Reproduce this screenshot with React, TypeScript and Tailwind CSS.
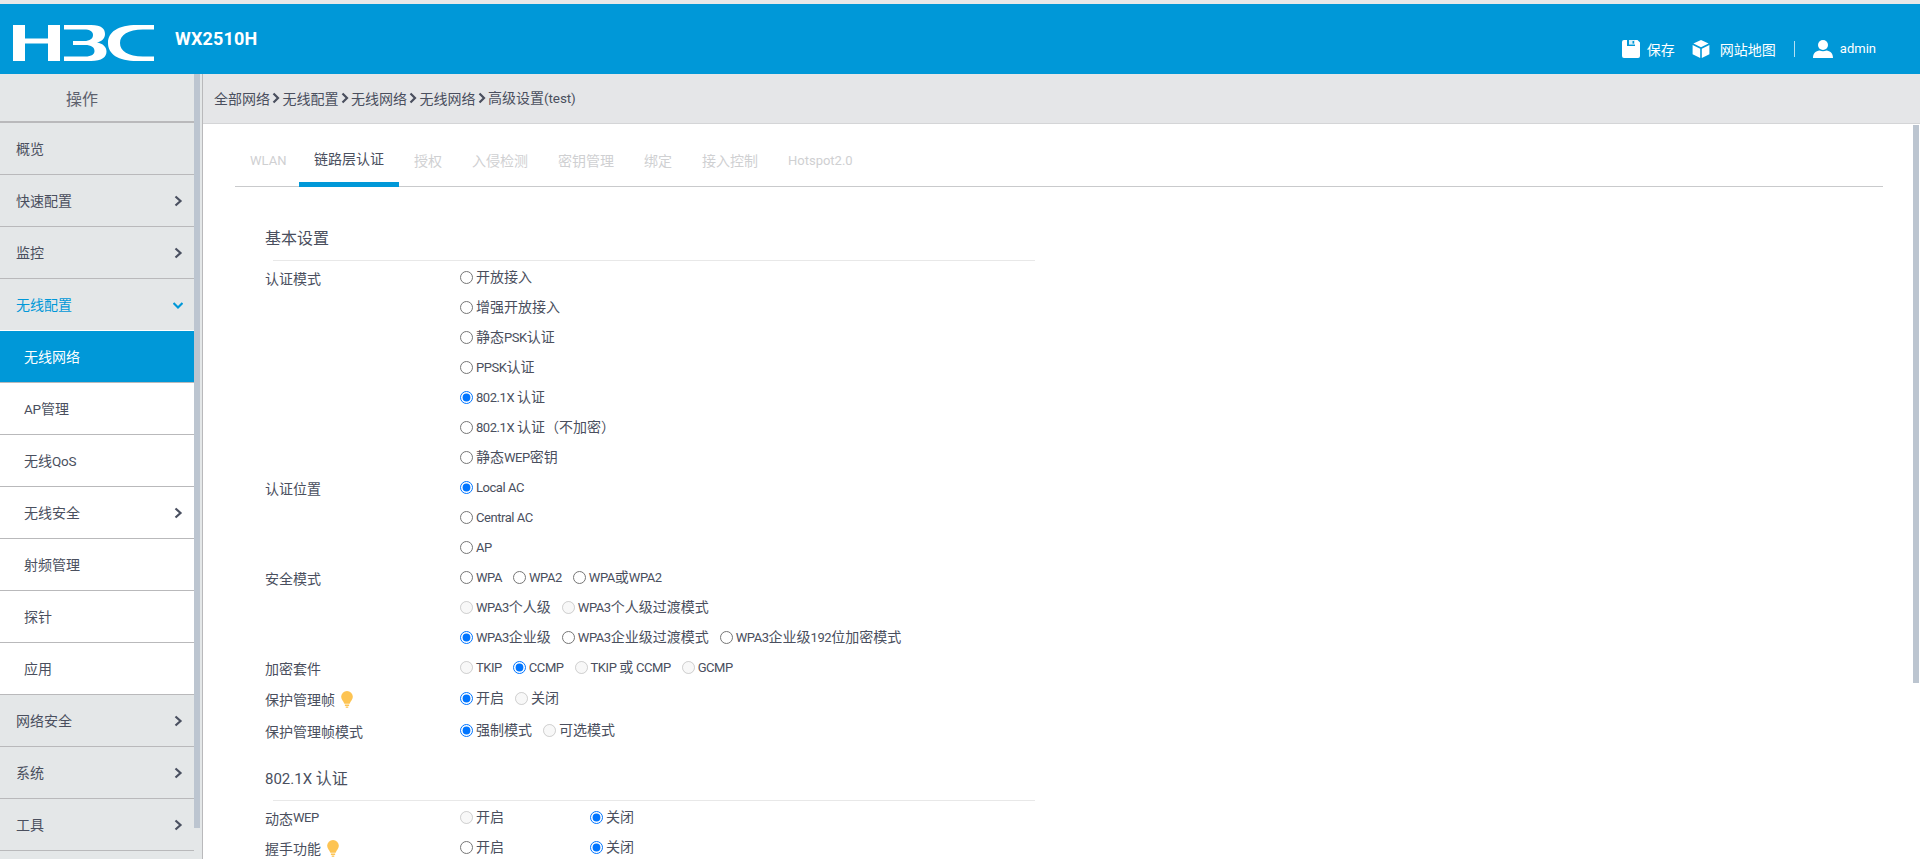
import React from "react";

const FONT = "font-['Noto_Sans_CJK_SC','Microsoft_YaHei',sans-serif]";

function T({ children, size = "text-[13px] tracking-[-0.45px]" }: { children: string; size?: string }) {
  const parts = children.split(/([\x20-\x7e]+)/).filter(Boolean);
  return (
    <>
      {parts.map((p, i) =>
        /^[\x20-\x7e]+$/.test(p) ? (
          <span key={i} className={`font-['Roboto',sans-serif] ${size} whitespace-pre`}>
            {p}
          </span>
        ) : (
          <span key={i}>{p}</span>
        )
      )}
    </>
  );
}

function Chevron({ down, color = "#4a5060" }: { down?: boolean; color?: string }) {
  return (
    <svg width="10" height="12" viewBox="0 0 10 12" className="shrink-0">
      {down ? (
        <path d="M0.5 4 L5 8.5 L9.5 4" fill="none" stroke={color} strokeWidth="2.2" />
      ) : (
        <path d="M2.5 1.5 L7.5 6 L2.5 10.5" fill="none" stroke={color} strokeWidth="2.2" />
      )}
    </svg>
  );
}

function Logo() {
  return (
    <svg width="142" height="36" viewBox="0 0 142 36" className="ml-[13px] shrink-0" fill="#fff">
      <path d="M0 0H12V13.5H35V0H47V36H35V18.5H12V36H0Z" />
      <path d="M51 0H78C89 0 92 4 92 9C92 13 89 16.5 84 17.5C90 18.5 93.5 22 93.5 26.5C93.5 32 89 36 78 36H51V31.5H72C79 31.5 81.5 29 81.5 26C81.5 22.5 78.5 20 72 20H60V16H71C77 16 80 13.5 80 10C80 6.5 77 4.5 71 4.5H51Z" />
      <path d="M141 0V4.5H130C115 4.5 107 10 107 18C107 26 115 31.5 130 31.5H141V36H124C105 36 95 29 95 18C95 7 105 0 124 0Z" />
    </svg>
  );
}

function HeaderBar() {
  return (
    <header className="flex h-[70px] shrink-0 items-start bg-[#0098d8] text-white">
      <div className="mt-[21px]">
        <Logo />
      </div>
      <div className="ml-[20px] mt-[25px] font-['Roboto',sans-serif] text-[18px] font-bold leading-[20px] tracking-[0.15px]">
        WX2510H
      </div>
      <div className="ml-auto mr-[44px] mt-[36px] flex h-[18px] items-center text-[14px]">
        <svg width="18" height="18" viewBox="0 0 18 18" fill="#fff">
          <path d="M2 0H5V6H13V0H15.5L18 2.5V16A2 2 0 0 1 16 18H2A2 2 0 0 1 0 16V2A2 2 0 0 1 2 0Z" />
          <rect x="7" y="0" width="6" height="4.6" fill="#fff" opacity="0.85" />
          <rect x="10.5" y="1" width="1.6" height="2.6" fill="#0098d8" />
        </svg>
        <span className="ml-[7px]">保存</span>
        <svg width="18" height="18" viewBox="0 0 18 18" fill="#fff" className="ml-[17px]">
          <path d="M9 0L16.6 3.6L9 7.2L1.4 3.6Z" />
          <path d="M0.6 5L8.2 8.7V18L0.6 14.2Z" />
          <path d="M17.4 5L9.8 8.7V18L17.4 14.2Z" />
        </svg>
        <span className="ml-[10px]">网站地图</span>
        <div className="ml-[18px] h-[16px] w-px bg-white/70" />
        <svg width="20" height="18" viewBox="0 0 20 18" fill="#fff" className="ml-[18px]">
          <circle cx="10" cy="5" r="5" />
          <path d="M0 18C0 13 3 11 6.5 10.5C8.5 11.6 11.5 11.6 13.5 10.5C17 11 20 13 20 18Z" />
        </svg>
        <span className="ml-[7px] font-['Roboto',sans-serif] text-[13px]">admin</span>
      </div>
    </header>
  );
}

type NavItem = { label: string; arrow?: boolean; tone?: "gray" | "open" | "active" | "white" };

const nav: NavItem[] = [
  { label: "概览" },
  { label: "快速配置", arrow: true },
  { label: "监控", arrow: true },
  { label: "无线配置", tone: "open" },
  { label: "无线网络", tone: "active" },
  { label: "AP管理", tone: "white" },
  { label: "无线QoS", tone: "white" },
  { label: "无线安全", tone: "white", arrow: true },
  { label: "射频管理", tone: "white" },
  { label: "探针", tone: "white" },
  { label: "应用", tone: "white" },
  { label: "网络安全", arrow: true },
  { label: "系统", arrow: true },
  { label: "工具", arrow: true },
  { label: "" },
];

function NavRow({ item }: { item: NavItem }) {
  const tone = item.tone ?? "gray";
  const cls = {
    gray: "bg-[#e4e7e8] text-[#4a4f5e] pl-[16px] border-[#b9b9bb]",
    open: "bg-[#e4e7e8] text-[#0098d8] pl-[16px] border-white",
    active: "bg-[#0098d8] text-white pl-[24px] border-[#b9b9bb]",
    white: "bg-white text-[#4a4f5e] pl-[24px] border-[#b9b9bb]",
  }[tone];
  return (
    <div className={`flex h-[52px] shrink-0 items-center border-b pr-[11px] text-[14px] ${cls}`}>
      <span className="flex-1">
        <T size="text-[13.5px] tracking-[-0.2px]">{item.label}</T>
      </span>
      {item.arrow && <Chevron />}
      {tone === "open" && <Chevron down color="#0098d8" />}
    </div>
  );
}

function Sidebar() {
  return (
    <aside className="relative h-full w-[203px] shrink-0 overflow-hidden border-r border-[#b9b9bb] bg-[#e4e7e8]">
      <div className="w-[194px]">
        <div className="flex h-[49px] items-center justify-center border-b-2 border-[#b9b9bb] bg-[#e4e7e8] pr-[30px] text-[16px] text-[#5d616d]">
          操作
        </div>
        {nav.map((n, i) => (
          <NavRow key={i} item={n} />
        ))}
      </div>
      <div className="absolute left-[194px] top-0 h-[754px] w-[6px] bg-[#bcc5d0]" />
    </aside>
  );
}

function Crumbs() {
  const items = ["全部网络", "无线配置", "无线网络", "无线网络", "高级设置(test)"];
  return (
    <div className="flex h-[50px] shrink-0 items-center border-b border-[#d4d5d7] bg-[#e5e6e8] pb-[1px] text-[14px] text-[#4a4f5e]">
      <div className="ml-[11px] flex items-center">
        {items.map((c, i) => (
          <React.Fragment key={i}>
            {i > 0 && (
              <svg width="8" height="12" viewBox="0 0 8 12" className="mx-[2.25px]">
                <path d="M1.5 1.5L6 6L1.5 10.5" fill="none" stroke="#4a4f5e" strokeWidth="2.2" />
              </svg>
            )}
            <span>
              <T size="text-[13.5px] tracking-[-0.1px]">{c}</T>
            </span>
          </React.Fragment>
        ))}
      </div>
    </div>
  );
}

function Tabs() {
  const tabs = ["WLAN", "链路层认证", "授权", "入侵检测", "密钥管理", "绑定", "接入控制", "Hotspot2.0"];
  return (
    <div className="ml-[32px] mr-[37px] mt-[20px] flex h-[43px] items-stretch border-b border-[#c9cacc] text-[14px]">
      {tabs.map((t, i) => (
        <div
          key={t}
          className={`mb-[-1px] flex items-center px-[15px] pb-[10px] ${
            i === 1 ? "border-b-[5px] border-[#0098d8] pb-[5px] text-[#4a4f5e]" : "text-[#cfd0d2]"
          } ${i === 0 ? "w-[64px]" : ""}`}
        >
          <T size="text-[13px]">{t}</T>
        </div>
      ))}
    </div>
  );
}

function Opt({
  label,
  checked,
  disabled,
  wide,
}: {
  label: string;
  checked?: boolean;
  disabled?: boolean;
  wide?: boolean;
}) {
  return (
    <label className={`flex items-center ${wide ? "w-[130px]" : "mr-[11px]"}`}>
      <input
        type="radio"
        checked={!!checked}
        disabled={disabled}
        readOnly
        className="m-0 h-[13px] w-[13px] shrink-0"
      />
      <span className="ml-[3px] whitespace-nowrap pb-[1px] text-[#4a4f5e]">
        <T>{label}</T>
      </span>
    </label>
  );
}

function Row({
  label,
  tip,
  h = "h-[30px]",
  children,
}: {
  label?: string;
  tip?: boolean;
  h?: string;
  children: React.ReactNode;
}) {
  return (
    <div className={`flex ${h} items-center`}>
      <div className="flex w-[195px] shrink-0 items-center pt-[2px] text-[#4a4f5e]">
        {label && <T>{label}</T>}
        {tip && <Bulb />}
      </div>
      <div className="flex items-center">{children}</div>
    </div>
  );
}

function Bulb() {
  return (
    <svg width="12" height="17" viewBox="0 0 11 16" className="ml-[6px]" fill="#fdc453">
      <path d="M5.5 0A5.5 5.5 0 0 1 11 5.5C11 8 9 9.5 8 12H3C2 9.5 0 8 0 5.5A5.5 5.5 0 0 1 5.5 0Z" />
      <rect x="3.5" y="12.7" width="4" height="1.4" />
      <rect x="4.3" y="14.6" width="2.4" height="1.2" />
    </svg>
  );
}

function SectionTitle({ children, mt }: { children: string; mt: string }) {
  return (
    <div className={`${mt}`}>
      <div className="h-[30px] pl-0 text-[16px] leading-[30px] text-[#4a4f5e]">
        <T size="text-[15px]">{children}</T>
      </div>
    </div>
  );
}

function Form() {
  return (
    <div className="ml-[62px] w-[770px] text-[14px]">
      <SectionTitle mt="mt-[35px]">基本设置</SectionTitle>
      <div className="ml-[8px] mt-[8px] h-px w-[762px] bg-[#e8e8e8]" />
      <div className="mt-[1px]">
        <Row label="认证模式"><Opt label="开放接入" /></Row>
        <Row><Opt label="增强开放接入" /></Row>
        <Row><Opt label="静态PSK认证" /></Row>
        <Row><Opt label="PPSK认证" /></Row>
        <Row><Opt label="802.1X 认证" checked /></Row>
        <Row><Opt label="802.1X 认证（不加密）" /></Row>
        <Row><Opt label="静态WEP密钥" /></Row>
        <Row label="认证位置"><Opt label="Local AC" checked /></Row>
        <Row><Opt label="Central AC" /></Row>
        <Row><Opt label="AP" /></Row>
        <Row label="安全模式">
          <Opt label="WPA" />
          <Opt label="WPA2" />
          <Opt label="WPA或WPA2" />
        </Row>
        <Row>
          <Opt label="WPA3个人级" disabled />
          <Opt label="WPA3个人级过渡模式" disabled />
        </Row>
        <Row>
          <Opt label="WPA3企业级" checked />
          <Opt label="WPA3企业级过渡模式" />
          <Opt label="WPA3企业级192位加密模式" />
        </Row>
        <Row label="加密套件">
          <Opt label="TKIP" disabled />
          <Opt label="CCMP" checked />
          <Opt label="TKIP 或 CCMP" disabled />
          <Opt label="GCMP" disabled />
        </Row>
        <Row label="保护管理帧" tip h="h-[32px]">
          <Opt label="开启" checked />
          <Opt label="关闭" disabled />
        </Row>
        <Row label="保护管理帧模式" h="h-[32px]">
          <Opt label="强制模式" checked />
          <Opt label="可选模式" disabled />
        </Row>
      </div>
      <SectionTitle mt="mt-[16px]">802.1X 认证</SectionTitle>
      <div className="ml-[8px] mt-[8px] h-px w-[762px] bg-[#e8e8e8]" />
      <div className="mt-[1px]">
        <Row label="动态WEP">
          <Opt label="开启" disabled wide />
          <Opt label="关闭" checked />
        </Row>
        <Row label="握手功能" tip>
          <Opt label="开启" wide />
          <Opt label="关闭" checked />
        </Row>
      </div>
    </div>
  );
}

export default function App() {
  return (
    <div className={`flex h-[859px] w-[1920px] flex-col overflow-hidden bg-white ${FONT}`}>
      <div className="h-[4px] shrink-0 bg-[#e8e8e8]" />
      <HeaderBar />
      <div className="flex min-h-0 flex-1">
        <Sidebar />
        <main className="relative min-w-0 flex-1 overflow-hidden">
          <Crumbs />
          <Tabs />
          <Form />
          <div className="absolute right-px top-[51px] h-[558px] w-[6px] bg-[#bcc5d0]" />
        </main>
      </div>
    </div>
  );
}
